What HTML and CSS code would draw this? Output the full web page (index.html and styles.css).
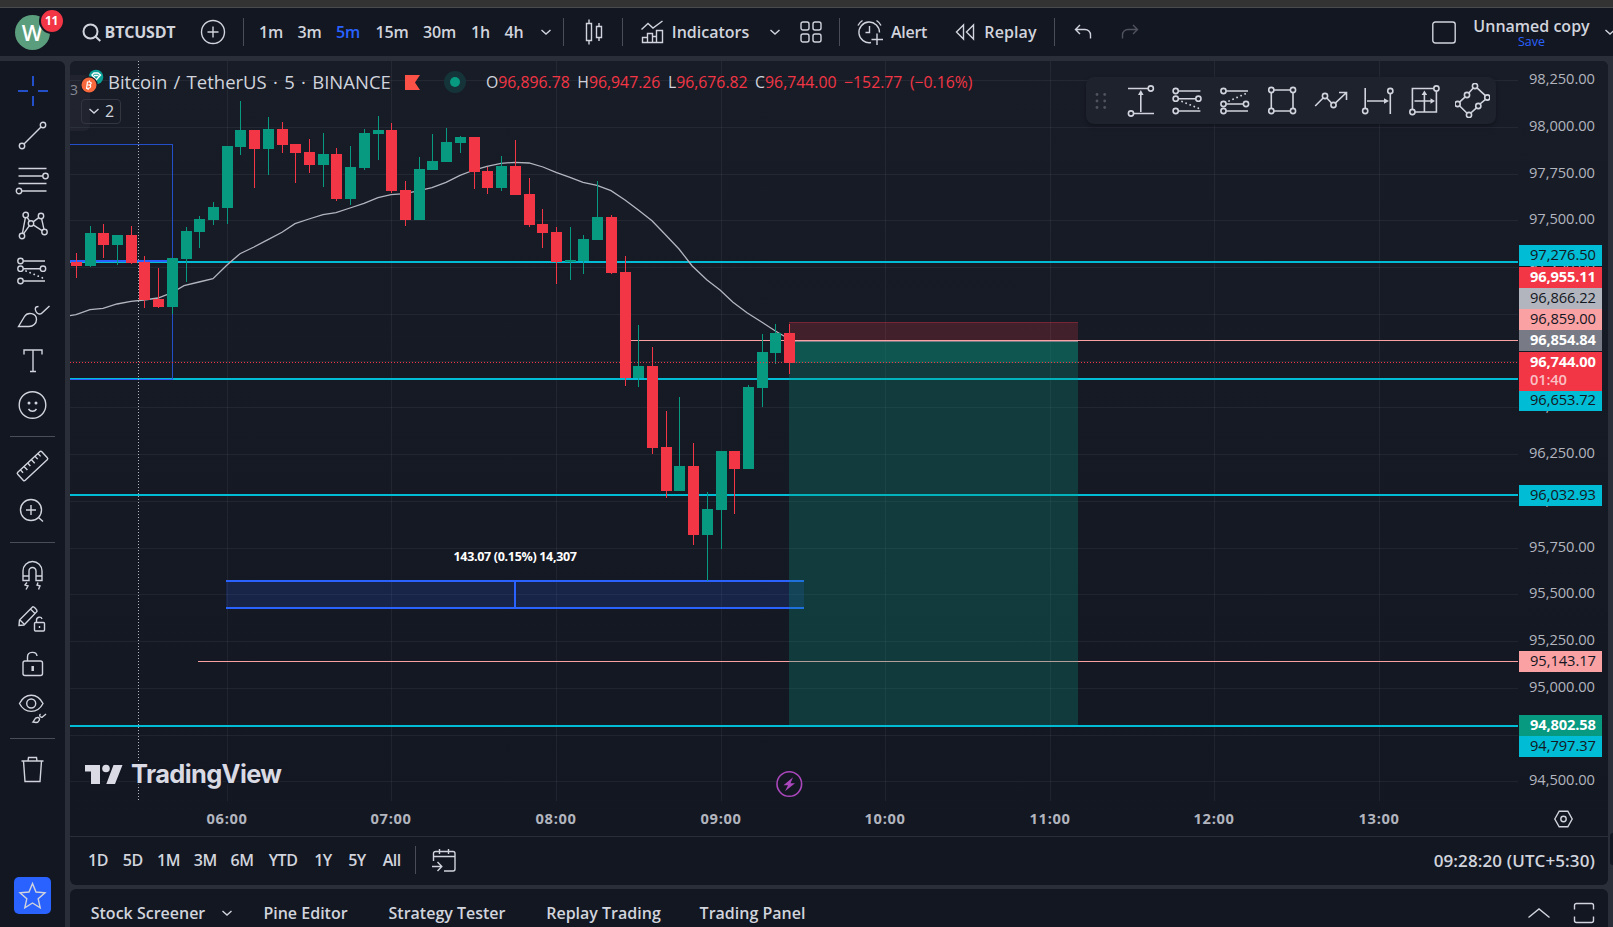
FILE: index.html
```html
<!DOCTYPE html>
<html lang="en">
<head>
  <meta charset="UTF-8">
  <title>BTCUSDT</title>
  <meta name="viewport" content="width=device-width, initial-scale=1.0">
  <link rel="stylesheet" href="styles.css">
</head>
<body>

<div class="window-strip"></div>

<header class="topbar">
  <div class="cell"><div class="avatar"><span class="avatar-letter">W</span><span class="badge">11</span></div></div>
  <div class="cell symbol">
    <svg width="19" height="19" viewBox="0 0 19 19" stroke-width="2"><circle cx="8.5" cy="8.5" r="7"/><path d="M13.5 13.5l4.8 4.5"/></svg>
    <span class="symbol-name">BTCUSDT</span>
  </div>
  <div class="cell"><svg width="26" height="26" viewBox="0 0 26 26"><circle cx="13" cy="13" r="11.5"/><path d="M13 7.5v11M7.5 13h11"/></svg></div>
  <div class="cell"><i class="sep"></i></div>
  <div class="cell">1m</div>
  <div class="cell">3m</div>
  <div class="cell active">5m</div>
  <div class="cell">15m</div>
  <div class="cell">30m</div>
  <div class="cell">1h</div>
  <div class="cell">4h</div>
  <div class="cell tf-more"><svg width="12" height="8" viewBox="0 0 12 8"><path d="M1.5 2L6 6l4.500-4"/></svg></div>
  <div class="cell"><i class="sep"></i></div>
  <div class="cell"><svg width="18" height="28" viewBox="0 0 18 28"><path d="M1.500 5.500h5v17h-5zM4 1.500v4M4 22.500v4M11.500 8.500h5v11h-5zM14 5v3.500M14 19.500V23"/></svg></div>
  <div class="cell"><i class="sep"></i></div>
  <div class="cell indicators">
    <svg width="23" height="24" viewBox="0 0 23 24"><path d="M.5 9.500l6.500-6 5 4.500L21.500 1M1.500 22.500v-5h5v-4h5v3h4v-6h6v12zM6.500 17.500v5M11.500 16v6.500M15.500 16v6.500"/></svg>
    <span>Indicators</span>
  </div>
  <div class="cell"><svg width="12" height="8" viewBox="0 0 12 8"><path d="M1.500 2L6 6l4.500-4"/></svg></div>
  <div class="cell"><svg width="22" height="22" viewBox="0 0 22 22"><rect x="1" y="1" width="8" height="8" rx="2"/><rect x="13" y="1" width="8" height="8" rx="2"/><rect x="1" y="13" width="8" height="8" rx="2"/><rect x="13" y="13" width="8" height="8" rx="2"/></svg></div>
  <div class="cell"><i class="sep"></i></div>
  <div class="cell alert">
    <svg width="26" height="27" viewBox="0 0 26 27"><path d="M14 23.500A10.300 10.300 0 1 1 22.500 13.500M12.500 7v6.500H8.500M1 6.500A12 12 0 0 1 5.500 1.500M19.500 1.500A12 12 0 0 1 24 6.500M20 14.500v11.500M14.500 20.500H26"/></svg>
    <span>Alert</span>
  </div>
  <div class="cell replay">
    <svg width="20" height="18" viewBox="0 0 20 18"><path d="M8.500 2v14L1.500 9zM18.500 2v14L11.500 9z"/></svg>
    <span>Replay</span>
  </div>
  <div class="cell"><i class="sep"></i></div>
  <div class="cell"><svg width="18" height="16" viewBox="0 0 18 16"><path d="M6 1L1.500 5.500 6 10M1.500 5.500H11a5.500 5.500 0 0 1 5.500 5.500v3.500"/></svg></div>
  <div class="cell disabled"><svg width="18" height="16" viewBox="0 0 18 16"><path d="M12 1l4.500 4.500L12 10M16.500 5.500H7A5.500 5.500 0 0 0 1.500 11v3.500"/></svg></div>
  <div></div>
  <div class="cell"><svg width="24" height="23" viewBox="0 0 24 23"><rect x=".8" y="1" width="22.400" height="21" rx="2.500"/></svg></div>
  <div class="cell layout-name"><span>Unnamed copy</span><span class="save">Save</span></div>
  <div class="cell layout-more"><svg width="12" height="8" viewBox="0 0 12 8"><path d="M1.500 2L6 6l4.500-4"/></svg></div>
</header>

<div class="workspace">
  <nav class="tools">
    <div class="tool crosshair"><svg viewBox="0 0 37 37"><path d="M4 19h10M24 19h10M19 4v10M19 24v10"/></svg></div>
    <div class="tool"><svg viewBox="0 0 37 37"><path d="M10 27L27 10"/><circle cx="29" cy="8" r="2.700"/><circle cx="8" cy="29" r="2.700"/></svg></div>
    <div class="tool"><svg viewBox="0 0 37 37"><path d="M4.500 6.500h28M4.500 14H29M4.500 21.500h28M8 29h24.500"/><circle cx="31.500" cy="14" r="2.700"/><circle cx="5" cy="29" r="2.700"/></svg></div>
    <div class="tool"><svg viewBox="0 0 37 37"><path d="M8.400 26.300l3-15.600M13.200 10.400l2.400 3.800M19.200 14.900l5.600-4.300M27.600 11.600L30 22.300M28.100 23.700l-8.900-5.800M15.400 18.700L9.500 26.800"/><circle cx="11.700" cy="8" r="2.700"/><circle cx="27" cy="9" r="2.700"/><circle cx="17" cy="16.500" r="2.700"/><circle cx="8" cy="29" r="2.700"/><circle cx="30.500" cy="25" r="2.700"/></svg></div>
    <div class="tool"><svg viewBox="0 0 37 37"><path d="M9.200 9H31M9.200 16.700h17M9.200 29H31"/><path class="dots" d="M12 19l18 7.500"/><circle cx="6.500" cy="9" r="2.700"/><circle cx="6.500" cy="16.700" r="2.700"/><circle cx="29" cy="16.700" r="2.700"/><circle cx="6.500" cy="29" r="2.700"/></svg></div>
    <div class="tool"><svg viewBox="0 0 37 37"><path d="M4.500 29.500l6-10c3-5 12-3.500 12 3 0 4-3.500 7-7.500 7zM24.500 9.500c-4 0-3.500 3-2.500 5 1 2.500 4 3.500 6 1.500L35.500 9"/></svg></div>
    <div class="tool"><svg viewBox="0 0 37 37"><path d="M10 12.500V8h18v4.500M19 8v21.500M16 29.500h6"/></svg></div>
    <div class="tool"><svg viewBox="0 0 37 37"><circle cx="18.500" cy="18" r="13.300"/><path d="M14.500 22c2 3 6 3 8 0"/><g class="solid"><circle cx="15" cy="16" r="1.500"/><circle cx="22" cy="16" r="1.500"/></g></svg></div>
    <i class="rule rule-a"></i>
    <div class="tool"><svg viewBox="0 0 37 37"><g transform="rotate(-43 18.500 18)"><rect x="2" y="12.500" width="33" height="11" rx="1.500"/><path d="M7 12.500v4M12 12.500v5M17 12.500v4M22 12.500v5M27 12.500v4M31 12.500v4"/></g></svg></div>
    <div class="tool"><svg viewBox="0 0 37 37"><circle cx="17" cy="17" r="10.500"/><path d="M24.500 24.500l4.500 4M17 12v10M12 17h10"/></svg></div>
    <i class="rule rule-b"></i>
    <div class="tool"><svg viewBox="0 0 37 37"><path d="M9 24.500V15a9.500 9.500 0 0 1 19 0v9.500h-6V15a3.500 3.500 0 0 0-7 0v9.500zM9 20h6M22 20h6M13 26.500l-2 2.500 3 1-2 3.500M24 26.500l-1 2.500 3 1-1.500 3.500"/></svg></div>
    <div class="tool"><svg viewBox="0 0 37 37"><path d="M5 24.500l.5-5.500L18.500 6c1-1 5 3 4.500 4.500L10 24zM6 19l5 5M16.500 8l4.500 4.500"/><rect x="20.500" y="21.500" width="10" height="8.500" rx="1"/><path d="M22.500 21.500V19c0-3 4.500-4 5.500-1M25.500 25v2"/></svg></div>
    <div class="tool"><svg viewBox="0 0 37 37"><rect x="9" y="15" width="19.500" height="14.500" rx="2"/><path d="M13.500 15v-4c0-6 9-6 9.500-1"/><path class="thick" d="M18.700 20v5"/></svg></div>
    <div class="tool"><svg viewBox="0 0 37 37"><path d="M5.500 12.500c5.500-11 18-11 23.500 0-5.500 10.500-18 10.500-23.500 0z"/><circle cx="17.200" cy="12.500" r="4.500"/><path d="M19 31c1.500-1.500 1.500-5 5-4.500 3 .5 1 5-2 5zM26.500 23c-2 1.500 0 4 2 3l3.500-3"/></svg></div>
    <i class="rule rule-c"></i>
    <div class="tool"><svg viewBox="0 0 37 37"><path d="M7.500 10h22M9.500 10l1.500 20.500h15l1.500-20.500M14 10l.5-3.500h8l.5 3.500"/></svg></div>
    <div class="favorite"><svg width="29" height="29" viewBox="0 0 29 29"><path d="M14.500 2.500l3.500 8.500 9 .8-6.800 6 2 9-7.700-4.800-7.700 4.800 2-9L2 11.800l9-.8z"/></svg></div>
  </nav>

  <main class="content">
    <section class="chart-panel">
      <div class="chart-area">
        <svg id="chart" width="1538" height="775" viewBox="70 61 1538 775"></svg>

        <div class="scale-stub">3</div>
        <div class="legend">
          <svg class="coin" width="25" height="26" viewBox="0 0 25 26">
            <circle cx="15" cy="8" r="7.300" fill="#0a9e94"/><path d="M11 6l2-2h4l2.500 2-4.300 5zM13 6.500h4.500" stroke="#fff" fill="none"/>
            <circle cx="8" cy="16" r="8.700" fill="#181c27"/><circle cx="8" cy="16" r="7.500" fill="#f7693c"/>
            <path d="M6.500 12.500l-1 7M6.300 13h2.200c2.500 0 2 3-.5 3H6M8 16c2.700 0 2 3.300-.8 3.300H5M8.500 11.500l-.2 1.500M7.300 19.300L7 21" stroke="#fff" fill="none" stroke-width="1.200"/>
          </svg>
          <span class="pair">Bitcoin / TetherUS · 5 · BINANCE</span>
          <svg class="flag" width="15" height="15" viewBox="0 0 15 15"><path d="M0 0h15l-5 7.500 5 7.500H0z" fill="#fb5147"/></svg>
          <span class="market"></span>
          <span class="ohlc"><b>O</b>96,896.78</span>
          <span class="ohlc"><b>H</b>96,947.26</span>
          <span class="ohlc"><b>L</b>96,676.82</span>
          <span class="ohlc"><b>C</b>96,744.00</span>
          <span class="ohlc">−152.77</span>
          <span class="ohlc">(−0.16%)</span>
        </div>
        <div class="studies"><svg width="12" height="8" viewBox="0 0 12 8"><path d="M1.500 2L6 6l4.500-4"/></svg><span>2</span></div>

        <div class="draw-bar">
          <div class="grip"><svg width="12" height="18" viewBox="0 0 12 18"><circle cx="2" cy="2.500" r="1.400"/><circle cx="9.700" cy="2.500" r="1.400"/><circle cx="2" cy="9" r="1.400"/><circle cx="9.700" cy="9" r="1.400"/><circle cx="2" cy="15.500" r="1.400"/><circle cx="9.700" cy="15.500" r="1.400"/></svg></div>
          <div class="draw"><svg viewBox="0 0 35 35"><path d="M5 5.500h20M10.500 30.500H31M17.800 9v20"/><path class="solid" d="M15 12l2.800-5 2.800 5z"/><circle cx="27.800" cy="5.500" r="2.600"/><circle cx="8" cy="30.500" r="2.600"/></svg></div>
          <div class="draw"><svg viewBox="0 0 35 35"><path d="M7.400 8h22M7.400 15.700h17.500M7.400 28h22"/><path class="dots" d="M11 18.500l17 7"/><circle cx="4.700" cy="8" r="2.600"/><circle cx="4.700" cy="15.700" r="2.600"/><circle cx="27.400" cy="15.700" r="2.600"/><circle cx="4.700" cy="28" r="2.600"/></svg></div>
          <div class="draw"><svg viewBox="0 0 35 35"><path d="M8.200 8H30M8.200 21h17M8.200 28H30"/><path class="dots" d="M11 18l17-7.500"/><circle cx="5.500" cy="8" r="2.600"/><circle cx="5.500" cy="21" r="2.600"/><circle cx="28" cy="21" r="2.600"/><circle cx="5.500" cy="28" r="2.600"/></svg></div>
          <div class="draw"><svg viewBox="0 0 35 35"><path d="M9 7h16.500M9 28h16.500M6.300 9.700v15.600M28 9.700v15.600"/><circle cx="6.300" cy="7" r="2.600"/><circle cx="28" cy="7" r="2.600"/><circle cx="6.300" cy="28" r="2.600"/><circle cx="28" cy="28" r="2.600"/></svg></div>
          <div class="draw"><svg viewBox="0 0 35 35"><path d="M2.200 23l7.900-8M13.800 15l4.700 5M22.300 20.200L33.500 9.500M26 9.500h7.500V17"/><circle cx="12" cy="13" r="2.600"/><circle cx="20.500" cy="22" r="2.600"/></svg></div>
          <div class="draw"><svg viewBox="0 0 35 35"><path d="M5.200 5v20.300M30.300 10.700V31M7 18h19"/><path class="solid" d="M24 15.200l5 2.800-5 2.800z"/><circle cx="5.200" cy="28" r="2.600"/><circle cx="30.300" cy="8" r="2.600"/></svg></div>
          <div class="draw"><svg viewBox="0 0 35 35"><path d="M26.800 5.500H5.400v20.800M8 29h21.400V8.200M17.400 10v18.500M7.500 18H26"/><path class="solid" d="M14.600 12l2.800-4.500 2.800 4.500zM23.500 15.200l4.500 2.800-4.500 2.800z"/><circle cx="29.400" cy="5.500" r="2.600"/><circle cx="5.400" cy="29" r="2.600"/></svg></div>
          <div class="draw"><svg viewBox="0 0 35 35"><path d="M18.200 5l-4.400 5M10.200 13.900l-5.700 5.200M4.500 22.800l7.600 7.400M15.800 30l5.700-5.200M25 21l5.500-4.600M30.400 12.700L22 4.800"/><circle cx="20" cy="3" r="2.600"/><circle cx="32.300" cy="14.500" r="2.600"/><circle cx="14" cy="32" r="2.600"/><circle cx="2.600" cy="21" r="2.600"/><circle cx="12" cy="12" r="2.600"/><circle cx="23.300" cy="23" r="2.600"/></svg></div>
        </div>
      </div>

      <div class="range-bar">
        <div class="cell">1D</div>
        <div class="cell">5D</div>
        <div class="cell">1M</div>
        <div class="cell">3M</div>
        <div class="cell">6M</div>
        <div class="cell">YTD</div>
        <div class="cell">1Y</div>
        <div class="cell">5Y</div>
        <div class="cell">All</div>
        <div class="cell"><i class="sep"></i></div>
        <div class="cell"><svg width="26" height="25" viewBox="0 0 26 25"><path d="M2.500 13V5.500a2 2 0 0 1 2-2h17.500a2 2 0 0 1 2 2v15.500a2 2 0 0 1-2 2h-9M2.500 8.500H24M8.500 1v5M17.500 1v5M1 18.500h9.500M6.500 14l4.300 4.500-4.300 4.500"/></svg></div>
        <div class="clock">09:28:20 (UTC+5:30)</div>
      </div>
    </section>

    <footer class="bottom-tabs">
      <div class="cell">Stock Screener</div>
      <div class="cell"><svg width="12" height="8" viewBox="0 0 12 8"><path d="M1.500 2L6 6l4.500-4"/></svg></div>
      <div class="cell">Pine Editor</div>
      <div class="cell">Strategy Tester</div>
      <div class="cell">Replay Trading</div>
      <div class="cell">Trading Panel</div>
      <div></div>
      <div class="cell"><svg width="24" height="12" viewBox="0 0 24 12"><path d="M1.500 10.500L12 2l10.500 8.500"/></svg></div>
      <div class="cell"><svg width="22" height="22" viewBox="0 0 22 22"><path d="M1.500 7.500v-4a2 2 0 0 1 2-2h15a2 2 0 0 1 2 2v4M1.500 14.500v4a2 2 0 0 0 2 2h15a2 2 0 0 0 2-2v-4"/></svg></div>
    </footer>
  </main>

  <div class="right-handle"></div>
</div>

<script src="chart.js"></script>
</body>
</html>
```

FILE: styles.css
```css
* { box-sizing: border-box; }
body {
  margin: 0;
  width: 1613px;
  height: 927px;
  overflow: hidden;
  display: flex;
  flex-direction: column;
  background: #2a2e39;
  color: #d1d4dc;
  font-family: 'Open Sans', 'Noto Sans', sans-serif;
  font-size: 16px;
  font-weight: 600;
}

svg {
  display: block;
  flex: none;
  fill: none;
  stroke: currentColor;
  stroke-width: 1.4;
}

.window-strip {
  height: 8px;
  background: #333;
  border-bottom: 1px solid #4a4b4d;
  flex: none;
}

.cell {
  display: flex;
  align-items: center;
  justify-content: center;
  white-space: nowrap;
  min-width: 0;
}
.sep {
  width: 1px;
  height: 28px;
  background: #4a4d57;
}

/* top bar */
.topbar {
  height: 48px;
  flex: none;
  display: grid;
  grid-template-columns:
    64px 129px 40px 21px
    34px 43px 34px 54px 41px 41px 26px 32px 9px
    52px 5px 140px 20px 51px 7px
    98px 110px 6px 52px 42px
    1fr 48px 127px 18px;
  background: #131722;
  overflow: hidden;
  letter-spacing: -0.25px;
}
.active { color: #2962ff; }
.disabled { color: #50535e; }
.tf-more { padding-left: 6px; }
.symbol { gap: 4px; }
.symbol svg { stroke-width: 2; }
.symbol-name { font-weight: 700; letter-spacing: -0.2px; }
.indicators { gap: 8px; }
.indicators span { letter-spacing: 0; }
.alert { gap: 8px; }
.replay { gap: 9px; }
.replay span { letter-spacing: 0.1px; }

.avatar {
  position: relative;
  width: 35px;
  height: 35px;
  border-radius: 50%;
  background: #5b9e7d;
  color: #fff;
  text-align: center;
  line-height: 34px;
  font-size: 22px;
}
.badge {
  position: absolute;
  left: 24px;
  top: -7px;
  width: 26px;
  height: 26px;
  border: 2px solid #131722;
  border-radius: 50%;
  background: #f23645;
  font-size: 12px;
  font-weight: 700;
  line-height: 21px;
}
.layout-name {
  flex-direction: column;
  justify-content: flex-start;
  padding-top: 7px;
  line-height: 22px;
  letter-spacing: 0;
}
.save {
  color: #2962ff;
  font-size: 12.500px;
  line-height: 10px;
  font-weight: 400;
}
.layout-more {
  justify-content: flex-start;
  padding-left: 9px;
}

/* workspace */
.workspace {
  flex: 1;
  display: flex;
  gap: 5px;
  padding-top: 5px;
  min-height: 0;
}

.tools {
  width: 65px;
  flex: none;
  display: flex;
  flex-direction: column;
  align-items: center;
  padding: 7px 0 13px;
  background: #131722;
  border-top-right-radius: 6px;
}
.tool {
  height: 45px;
  flex: none;
  padding: 4px 0;
}
.tool svg { width: 37px; height: 37px; }
.crosshair { color: #2350c8; }
.crosshair svg { stroke-width: 2; }
.dots { stroke-dasharray: 0.1 4.3; stroke-linecap: round; stroke-width: 1.8; }
.solid { fill: currentColor; stroke: none; }
.thick { stroke-width: 2.5; }
.rule {
  width: 45px;
  height: 1px;
  flex: none;
  background: #4a4d57;
}
.rule-a { margin: 8px 0 7px; }
.rule-b { margin: 8px 0 9px; }
.rule-c { margin: 6px 0 8px; }
.favorite {
  width: 37px;
  height: 37px;
  flex: none;
  margin-top: auto;
  display: flex;
  align-items: center;
  justify-content: center;
  border-radius: 5px;
  background: #2962ff;
}

.content {
  width: 1538px;
  flex: none;
  display: flex;
  flex-direction: column;
  gap: 4px;
}
.chart-panel {
  height: 824px;
  flex: none;
  border-radius: 6px;
  background: #131722;
  overflow: hidden;
}
.chart-area {
  position: relative;
  height: 775px;
  background: linear-gradient(#181c27, #131722);
}
#chart {
  stroke: none;
  font-family: 'Open Sans', 'Noto Sans', sans-serif;
}
.crisp { shape-rendering: crispEdges; }

/* legend over the chart */
.scale-stub {
  position: absolute;
  left: 0;
  top: 14px;
  width: 20px;
  height: 56px;
  border-radius: 0 6px 6px 0;
  background: rgba(255,255,255,0.04);
  color: #868993;
  font-size: 14px;
  font-weight: 400;
  line-height: 29px;
}
.legend {
  position: absolute;
  left: 11px;
  top: 8px;
  height: 26px;
  display: flex;
  align-items: center;
  font-weight: 400;
}
.coin { stroke: none; margin-top: -1px; }
.pair {
  width: 283px;
  margin-left: 2px;
  font-size: 18.500px;
  font-weight: 500;
  word-spacing: 1.500px;
  line-height: 26px;
  white-space: nowrap;
}
.flag { stroke: none; margin-left: 14px; }
.market {
  width: 10px;
  height: 10px;
  margin: 0 26px 0 30px;
  border-radius: 50%;
  background: #089981;
  box-shadow: 0 0 0 6px #14343a;
}
.ohlc {
  display: flex;
  margin-right: 7.500px;
  color: #f23645;
  font-size: 15.800px;
}
.ohlc b {
  color: #d1d4dc;
  font-weight: 400;
}
.studies {
  position: absolute;
  left: 11px;
  top: 38px;
  width: 40px;
  height: 25px;
  display: flex;
  align-items: center;
  justify-content: center;
  gap: 5px;
  padding-bottom: 2px;
  border: 1px solid #33363f;
  border-radius: 4px;
  font-weight: 400;
}

.draw-bar {
  position: absolute;
  left: 1016px;
  top: 16px;
  width: 410px;
  height: 47px;
  display: flex;
  border-radius: 8px;
  background: #1e222d;
  box-shadow: 0 2px 4px rgba(0,0,0,0.3);
}
.grip {
  width: 31px;
  padding: 15px 0 0 9px;
  color: #50535e;
}
.grip svg { fill: currentColor; stroke: none; }
.draw {
  width: 47.400px;
  padding: 6px 0 0 6.200px;
}
.draw svg { width: 35px; height: 35px; stroke-width: 1.6; }
.draw .solid { stroke: none; }

/* range row */
.range-bar {
  height: 49px;
  display: grid;
  grid-template-columns: 36px 33.500px 38px 35.500px 38px 44px 36px 32px 37.500px 10.500px 46px 1fr;
  padding: 0 13px 2px 10px;
  border-top: 1px solid #2a2e39;
  letter-spacing: -0.5px;
}
.clock {
  align-self: center;
  text-align: right;
  font-size: 17px;
  letter-spacing: 0.1px;
}

.bottom-tabs {
  height: 48px;
  flex: none;
  display: grid;
  grid-template-columns: 146px 12px 145px 138px 175px 123px 1fr 41px 49px;
  background: #131722;
  border-radius: 6px 6px 0 0;
  padding-left: 5px;
}

.right-handle {
  width: 3px;
  height: 32px;
  flex: none;
  margin: 772px 0 0 -3px;
  border-radius: 4px 0 0 4px;
  background: #131722;
}
```

FILE: chart.js
```js
const UP = '#089981';
const DOWN = '#f23645';
const RIGHT = 1518;

// left, high, body top, body bottom, low, up
const candles = [
  [71, 253, 262, 266, 278, 0], [85, 226, 233, 266, 267, 1], [98, 224, 233, 245, 258, 0],
  [112, 235, 235, 245, 265, 1], [126, 226, 235, 263, 264, 0], [139, 256, 262, 300, 308, 0],
  [153, 268, 299, 307, 308, 0], [167, 258, 258, 307, 314, 1], [181, 227, 231, 259, 282, 1],
  [194, 216, 219, 232, 248, 1], [208, 202, 207, 220, 225, 1], [222, 146, 146, 208, 224, 1],
  [235, 101, 130, 147, 155, 1], [249, 130, 130, 149, 188, 0], [263, 117, 129, 149, 175, 1],
  [277, 122, 129, 145, 153, 0], [290, 144, 144, 153, 183, 0], [304, 139, 152, 165, 173, 0],
  [318, 133, 154, 165, 187, 1], [331, 148, 154, 199, 201, 0], [345, 146, 167, 199, 205, 1],
  [359, 129, 133, 168, 170, 1], [373, 116, 130, 134, 160, 1], [386, 123, 130, 191, 193, 0],
  [400, 181, 190, 220, 226, 0], [414, 157, 169, 220, 220, 1], [427, 134, 161, 170, 170, 1],
  [441, 128, 142, 162, 162, 1], [455, 136, 137, 143, 153, 1], [469, 137, 137, 172, 189, 0],
  [482, 167, 171, 188, 194, 0], [496, 156, 166, 188, 191, 1], [510, 140, 166, 195, 195, 0],
  [524, 178, 194, 225, 227, 0], [537, 209, 224, 233, 248, 0], [551, 227, 232, 262, 284, 0],
  [565, 227, 260, 262, 280, 1], [578, 235, 239, 261, 274, 1], [592, 181, 217, 240, 240, 1],
  [606, 215, 217, 273, 274, 0], [620, 256, 272, 378, 386, 0], [633, 325, 366, 378, 387, 1],
  [647, 347, 366, 448, 454, 0], [661, 411, 447, 491, 498, 0], [674, 397, 466, 491, 491, 1],
  [688, 443, 466, 535, 545, 0], [702, 492, 509, 535, 581, 1], [716, 451, 451, 510, 549, 1],
  [729, 451, 451, 469, 514, 0], [743, 385, 387, 469, 469, 1], [757, 334, 352, 388, 407, 1],
  [770, 324, 333, 353, 364, 1], [784, 324, 333, 363, 374, 0]
];

const average = [
  [70, 315.7], [76, 314.7], [90, 309.7], [103, 308.3], [117, 304], [131, 301.3], [144, 300],
  [158, 298], [172, 292.7], [184, 285.7], [199, 282], [213, 278.7], [227, 265], [240, 253.7],
  [254, 247], [268, 239.7], [282, 232.3], [295, 223.7], [309, 219], [323, 214.7], [336, 212.7],
  [350, 208], [364, 203.3], [378, 197.7], [391, 194.7], [405, 193.7], [419, 190.7], [432, 187.7],
  [446, 182.3], [460, 175.3], [474, 170], [487, 166.3], [501, 163.3], [515, 162.3], [529, 163],
  [543, 167], [556, 172.3], [570, 177.3], [583, 182.3], [597, 185.3], [611, 190.7], [625, 200],
  [638, 209.7], [652, 220.7], [665, 234.3], [679, 249], [692, 265.7], [707, 280], [720, 290],
  [733, 302.3], [747, 312.7], [762, 322.3], [775, 330.7], [789, 339]
];

const gridY = [80, 127, 174, 220, 267, 314, 361, 407, 454, 501, 548, 594, 641, 688, 735, 781];
const hours = [[227, '06:00'], [391, '07:00'], [556, '08:00'], [721, '09:00'], [885, '10:00'],
  [1050, '11:00'], [1214, '12:00'], [1379, '13:00']];

// prices fully covered by tags
const covered = [97000, 96750, 94750];

// top, height, fill, text colour, text, bold
const tags = [
  [245, 21, '#00bcd4', '#131722', '97,276.50', 0],
  [267, 21, '#f23645', '#fff', '96,955.11', 1],
  [288, 21, '#b2b5be', '#131722', '96,866.22', 0],
  [309, 21, '#faa1a4', '#131722', '96,859.00', 0],
  [330, 21, '#787b86', '#fff', '96,854.84', 1],
  [352, 39, '#f23645', '#fff', '96,744.00', 1],
  [391, 20, '#00bcd4', '#131722', '96,653.72', 0],
  [485, 21, '#00bcd4', '#131722', '96,032.93', 0],
  [651, 21, '#faa1a4', '#131722', '95,143.17', 0],
  [715, 21, '#089981', '#fff', '94,802.58', 1],
  [736, 21, '#00bcd4', '#131722', '94,797.37', 0]
];

function rect(x, y, w, h, fill, extra = '') {
  return `<rect x="${x}" y="${y}" width="${w}" height="${h}" fill="${fill}" ${extra}/>`;
}

function label(x, y, size, width, fill, text, extra = '') {
  return `<text x="${x}" y="${y}" font-size="${size}" textLength="${width}" fill="${fill}" ${extra}>${text}</text>`;
}

let out = '<g class="crisp">';

// grid
gridY.forEach(y => { out += rect(70, y, RIGHT - 70, 1, '#f0f3fa', 'fill-opacity=".06"'); });
hours.forEach(h => { out += rect(h[0], 61, 1, 740, '#f0f3fa', 'fill-opacity=".06"'); });

// levels
[261, 378, 494, 725].forEach(y => { out += rect(70, y, RIGHT - 70, 2, '#00bcd4'); });
out += rect(626, 340, RIGHT - 626, 1, '#faa1a4');
out += rect(198, 661, RIGHT - 198, 1, '#faa1a4');

// blue box on the left
out += rect(70, 144, 103, 1, '#2350c8') + rect(172, 144, 1, 235, '#2350c8');
out += rect(70, 260, 103, 2, '#2962ff') + rect(70, 379, 103, 1, '#2962ff');

// price range
out += rect(226, 582, 578, 25, '#2962ff', 'fill-opacity=".17"');
out += rect(226, 580, 578, 2, '#2962ff') + rect(226, 607, 578, 2, '#2962ff') + rect(514, 582, 2, 25, '#2962ff');
out += '</g>';

out += `<polyline points="${average.join(' ')}" fill="none" stroke="#b2b5be" stroke-width="1.3"/>`;

// short position
out += '<g class="crisp">';
out += rect(789, 322, 289, 18, '#f23645', 'fill-opacity=".2"') + rect(789, 322, 289, 1, '#f23645', 'fill-opacity=".3"');
out += rect(789, 341, 289, 384, '#089981', 'fill-opacity=".27"');
out += rect(789, 341, 289, 22, '#089981', 'fill-opacity=".28"');
out += rect(789, 341, 289, 1, '#787b86');

candles.forEach(([x, high, top, bottom, low, up]) => {
  const color = up ? UP : DOWN;
  out += rect(x + 5, high, 1, low - high, color) + rect(x, top, 11, bottom - top, color);
});

out += `<path d="M70 362.5H${RIGHT}" stroke="${DOWN}" stroke-dasharray="1 2"/>`;
out += '<path d="M138.5 61V801" stroke="#b2b5be" stroke-dasharray="1 2"/>';
out += '</g>';

out += label(453.5, 560.5, 12.5, 123.5, '#fff', '143.07 (0.15%) 14,307', 'font-weight="700"');

// event marker
out += '<circle cx="789.300" cy="784" r="12.300" fill="#131722" stroke="#ab47bc" stroke-width="1.600"/>';
out += '<path d="M793 777.200l-9.500 8h4.500l-3 6 10-8h-4.500z" fill="#ab47bc"/>';

// watermark
out += '<g fill="#d9dae3" stroke="#131722" stroke-width="3" paint-order="stroke">';
out += '<path d="M85 765h15v19h-9v-12.500h-6zM113.500 765h9L115 784h-8.700z"/><circle cx="106" cy="768.500" r="3.800"/>';
out += '<text x="131" y="783" font-family="Inter" font-weight="700" font-size="25.500" textLength="151">TradingView</text></g>';

// price axis
gridY.forEach((y, i) => {
  const price = 98250 - i * 250;
  if (covered.includes(price)) return;
  out += label(1529, y + 3.7, 14.7, 66, '#b2b5be', price.toLocaleString('en-US') + '.00', 'font-weight="400"');
});
tags.forEach(([y, h, fill, color, text, bold]) => {
  out += rect(1519, y, 83, h, fill);
  out += label(1530, h === 20 ? y + 14 : y + 15, 14.7, 66, color, text, `font-weight="${bold ? 700 : 400}"`);
});
out += label(1530, 385, 14.7, 37, '#fff', '01:40', 'font-weight="600" fill-opacity=".7"');

// time axis
hours.forEach(h => { out += label(h[0] - 20.5, 823.5, 14.7, 40.5, '#b2b5be', h[1], 'font-weight="700"'); });
out += '<g fill="none" stroke="#d1d4dc" stroke-width="1.400"><path d="M1554.800 819l4.400-7.800h8.600l4.400 7.800-4.400 7.800h-8.600z"/><circle cx="1563.500" cy="819" r="2.700"/></g>';

document.getElementById('chart').innerHTML = out;
```
